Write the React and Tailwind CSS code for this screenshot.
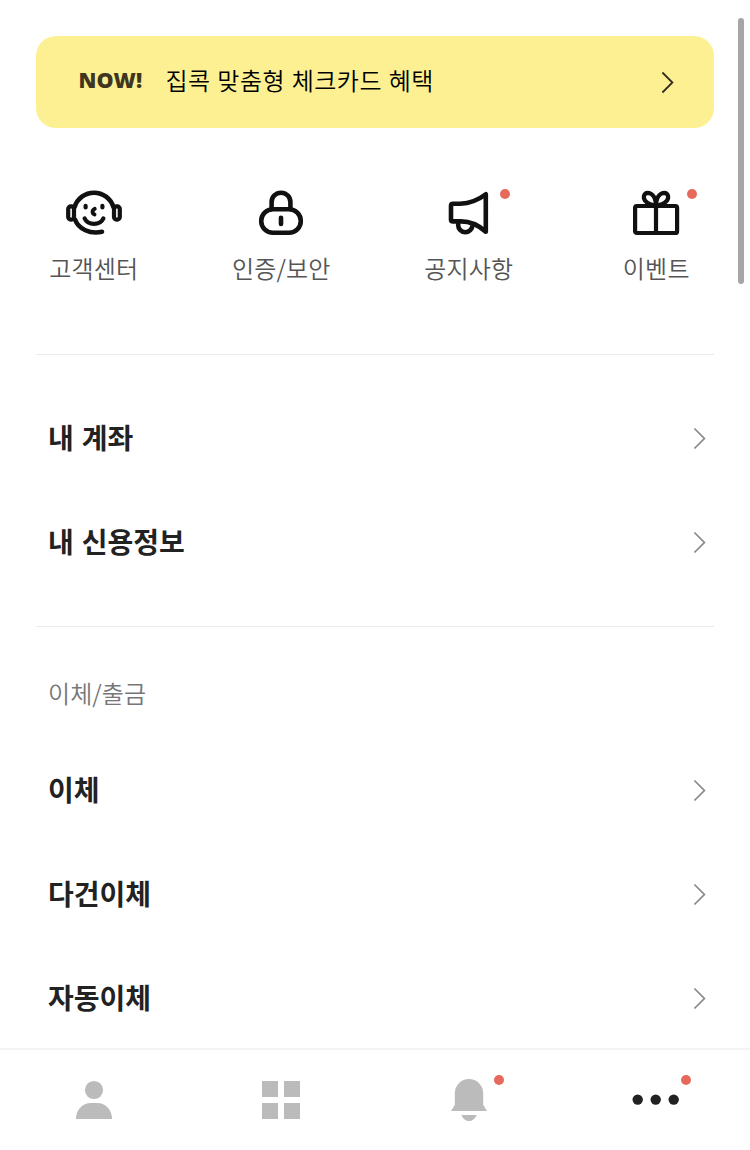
import React, { useState } from 'react';

const NewDot = ({ className }) => (
    <span className={`absolute w-[10px] h-[10px] rounded-full bg-[#e7695c] ${className}`} />
);

const HeadsetIcon = () => (
    <svg className="w-[60px] h-[60px]" viewBox="0 0 60 60" fill="none" stroke="#111" strokeWidth="4.6" strokeLinecap="round">
        <path d="M10.6 24A20.3 20.3 0 0 1 49.4 24" />
        <path d="M11 36.5C14.5 46 26 51.6 38 48.8" />
        <rect x="4.2" y="23.4" width="5.8" height="13.2" rx="2.6" strokeWidth="4.2" />
        <rect x="50" y="23.4" width="5.8" height="13.2" rx="2.6" strokeWidth="4.2" />
        <path d="M21.6 22.8V24.4M38.4 22.8V24.4" strokeWidth="4.2" />
        <path d="M30.8 25.8C27.8 27.3 27.8 30.4 30.6 31.6" strokeWidth="3.8" />
        <path d="M20.6 35.4C24 42.8 36 42.8 39.4 35.4" strokeWidth="4.2" />
    </svg>
);

const LockIcon = () => (
    <svg className="w-[60px] h-[60px]" viewBox="0 0 60 60" fill="none" stroke="#111" strokeWidth="4.6" strokeLinecap="round">
        <path d="M20.6 26V19.1A9.4 9.4 0 0 1 39.4 19.1V26" />
        <rect x="10.2" y="26.2" width="39.6" height="23.6" rx="11.8" />
        <path d="M30 34.8V41" strokeWidth="4.6" />
    </svg>
);

const MegaphoneIcon = () => (
    <svg className="w-[60px] h-[60px]" viewBox="0 0 60 60" fill="none" stroke="#111" strokeWidth="4.6" strokeLinejoin="round">
        <path d="M14 20.8H21C30 20.3 40 16.5 46.8 11.2V48.8C40 42.5 31 38.4 22 38.4H14Q12 38.4 12 36.4V22.8Q12 20.8 14 20.8Z" />
        <path d="M19.2 39V42.2A7.1 7.1 0 0 0 33.4 42.2" />
    </svg>
);

const GiftIcon = () => (
    <svg className="w-[60px] h-[60px]" viewBox="0 0 60 60" fill="none" stroke="#111" strokeWidth="4.2">
        <rect x="9.1" y="23" width="42" height="27" rx="1.8" />
        <path d="M30 22V50" />
        <path d="M30 22.5C29.8 15.5 27 10.2 22 9.8C17.4 10 16.8 15 19.4 18C22 20.8 26 22.5 30 22.5Z" />
        <path d="M30 22.5C30.2 15.5 33 10.2 38 9.8C42.6 10 43.2 15 40.6 18C38 20.8 34 22.5 30 22.5Z" />
    </svg>
);

const Chevron = ({ className }) => (
    <svg className={`w-[14px] h-[24px] ${className}`} viewBox="0 0 14 24" fill="none" stroke="currentColor">
        <path d="M1.4 2.5L11.4 12.5L1.4 22.5" />
    </svg>
);

const shortcuts = [
    { label: '고객센터', icon: HeadsetIcon },
    { label: '인증/보안', icon: LockIcon },
    { label: '공지사항', icon: MegaphoneIcon, isNew: true },
    { label: '이벤트', icon: GiftIcon, isNew: true },
];

const accountMenu = ['내 계좌', '내 신용정보'];
const transferMenu = ['이체', '다건이체', '자동이체'];

const MenuRow = ({ label }) => (
    <button className="w-full h-[104px] pl-3 pr-[7px] pb-[2px] flex items-center justify-between text-left">
        <span className="pb-[2px] text-[28px] leading-[40px] font-bold [word-spacing:1.6px] text-[#222]">{label}</span>
        <Chevron className="text-[#888] stroke-[1.7]" />
    </button>
);

const tabs = [
    {
        id: 'home',
        icon: (
            <svg className="w-[60px] h-[60px]" viewBox="0 0 60 60" fill="currentColor">
                <circle cx="30" cy="20" r="9.1" />
                <path d="M12 49C12 40 18 33 27 33H33C42 33 48 40 48 49Z" />
            </svg>
        ),
    },
    {
        id: 'services',
        icon: (
            <svg className="w-[60px] h-[60px]" viewBox="0 0 60 60" fill="currentColor">
                <path d="M11 11H27V27H11ZM33 11H49V27H33ZM11 33H27V49H11ZM33 33H49V49H33Z" />
            </svg>
        ),
    },
    {
        id: 'alarm',
        isNew: true,
        icon: (
            <svg className="w-[60px] h-[60px]" viewBox="0 0 60 60" fill="currentColor">
                <path d="M15.8 23.2A14.2 14.2 0 0 1 44.2 23.2V35L48 41H12L15.8 35Z" />
                <path d="M22.3 45H37.7C36 49 33.2 51 30 51C26.8 51 24 49 22.3 45Z" />
            </svg>
        ),
    },
    {
        id: 'more',
        isNew: true,
        icon: (
            <svg className="w-[60px] h-[60px]" viewBox="0 0 60 60" fill="currentColor">
                <circle cx="11.7" cy="29.6" r="5.2" />
                <circle cx="29.7" cy="29.6" r="5.2" />
                <circle cx="47.7" cy="29.6" r="5.2" />
            </svg>
        ),
    },
];

const App = () => {
    const [activeTab, setActiveTab] = useState('more');

    return (
        <div className="relative w-[750px] h-[1150px] overflow-hidden flex flex-col bg-white font-['Noto_Sans_CJK_KR','Noto_Sans',sans-serif]">
            <main className="flex-1 min-h-0 overflow-hidden pt-9">
                {/* Banner */}
                <div className="mx-9 h-[92px] pl-[42.5px] pr-[39px] rounded-[20px] bg-[#fdf093] flex items-center">
                    <span className="w-[87px] pb-[4px] font-['Open_Sans',sans-serif] text-[21.5px] leading-8 font-extrabold text-[#40351f]">NOW!</span>
                    <span className="flex-1 pb-[5px] text-[24px] leading-8 tracking-[0.5px] [word-spacing:0.8px] font-[350] text-black">집콕 맞춤형 체크카드 혜택</span>
                    <Chevron className="text-[#332d1c] stroke-[1.8]" />
                </div>

                {/* Shortcuts */}
                <div className="mt-[55px] h-[171px] grid grid-cols-4">
                    {shortcuts.map(({ label, icon: Icon, isNew }) => (
                        <button key={label} className="flex flex-col items-center">
                            <span className="relative">
                                <Icon />
                                {isNew && <NewDot className="left-[61px] top-[6px]" />}
                            </span>
                            <span className="mt-[8px] text-[24px] leading-[34px] tracking-[0.2px] font-[350] text-[#555]">{label}</span>
                        </button>
                    ))}
                </div>

                <section className="mx-9 pt-8 pb-[31px] border-t border-[#ebebeb]">
                    {accountMenu.map((label) => <MenuRow key={label} label={label} />)}
                </section>

                <section className="mx-9 pt-[48px] border-t border-[#ebebeb]">
                    <h2 className="pl-3 mb-[28px] text-[24px] leading-[36px] tracking-[0.1px] font-[350] text-[#777]">이체/출금</h2>
                    {transferMenu.map((label) => <MenuRow key={label} label={label} />)}
                </section>
            </main>

            {/* Bottom tabs */}
            <nav className="h-[102px] shrink-0 pt-[20px] grid grid-cols-4 border-t-2 border-[#f3f3f3] bg-white">
                {tabs.map((tab) => (
                    <button
                        key={tab.id}
                        onClick={() => setActiveTab(tab.id)}
                        className={`flex justify-center items-start ${activeTab === tab.id ? 'text-[#222]' : 'text-[#bbb]'}`}
                    >
                        <span className="relative">
                            {tab.icon}
                            {tab.isNew && <NewDot className="left-[55px] top-[5px]" />}
                        </span>
                    </button>
                ))}
            </nav>

            {/* Scroll thumb */}
            <div className="absolute right-[6px] top-[18px] w-[6px] h-[266px] rounded-full bg-[#a5a5a5]" />
        </div>
    );
};

export default App;
